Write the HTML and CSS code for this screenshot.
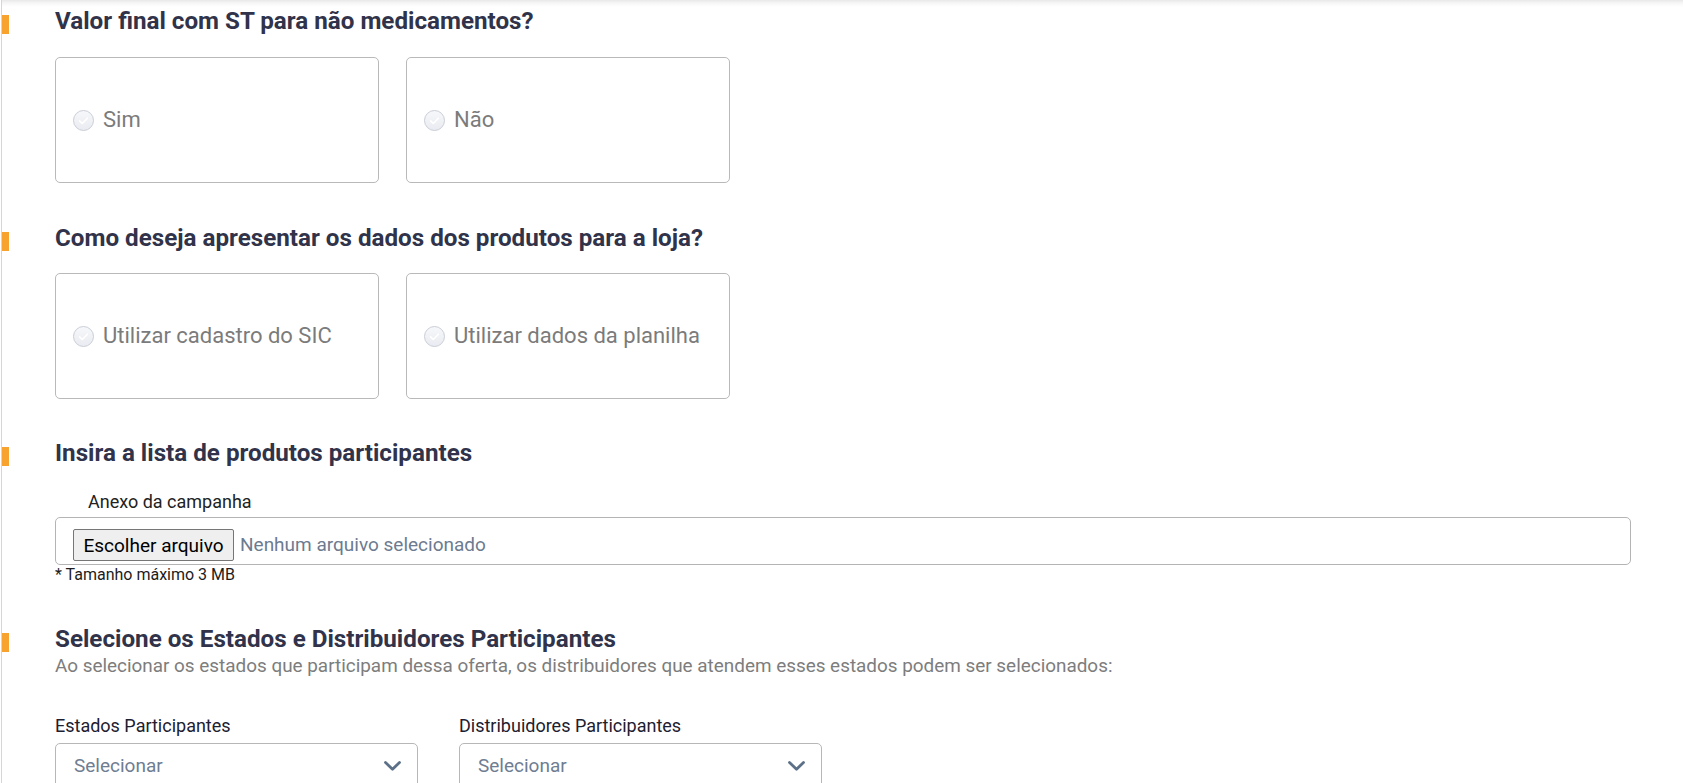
FILE: index.html
```html
<!DOCTYPE html>
<html lang="pt-BR">
<head>
<meta charset="utf-8">
<title>Oferta</title>
<link rel="stylesheet" href="styles.css">
</head>
<body>
<div class="page">
  <section class="block">
    <div class="head"><span class="mark"></span><h2 class="title">Valor final com ST para não medicamentos?</h2></div>
    <div class="content">
      <div class="options options-first">
        <div class="option">
          <svg class="radio" viewBox="0 0 21 21" width="21" height="21"><defs><linearGradient id="rg1" x1="0" y1="0" x2="0" y2="1"><stop offset="0" stop-color="#f7f8fa"/><stop offset="1" stop-color="#e9ebf1"/></linearGradient></defs><circle cx="10.5" cy="10.5" r="10" fill="url(#rg1)" stroke="#c9cdd7" stroke-width="1"/><path d="M6.6 10.9 L9.3 13.5 L14.4 8.2" fill="none" stroke="#ffffff" stroke-width="1.6" stroke-linecap="round" stroke-linejoin="round"/></svg>
          <span class="opt-label">Sim</span>
        </div>
        <div class="option">
          <svg class="radio" viewBox="0 0 21 21" width="21" height="21"><circle cx="10.5" cy="10.5" r="10" fill="url(#rg1)" stroke="#c9cdd7" stroke-width="1"/><path d="M6.6 10.9 L9.3 13.5 L14.4 8.2" fill="none" stroke="#ffffff" stroke-width="1.6" stroke-linecap="round" stroke-linejoin="round"/></svg>
          <span class="opt-label">Não</span>
        </div>
      </div>
    </div>
  </section>

  <section class="block block-2">
    <div class="head"><span class="mark"></span><h2 class="title">Como deseja apresentar os dados dos produtos para a loja?</h2></div>
    <div class="content">
      <div class="options">
        <div class="option">
          <svg class="radio" viewBox="0 0 21 21" width="21" height="21"><circle cx="10.5" cy="10.5" r="10" fill="url(#rg1)" stroke="#c9cdd7" stroke-width="1"/><path d="M6.6 10.9 L9.3 13.5 L14.4 8.2" fill="none" stroke="#ffffff" stroke-width="1.6" stroke-linecap="round" stroke-linejoin="round"/></svg>
          <span class="opt-label">Utilizar cadastro do SIC</span>
        </div>
        <div class="option">
          <svg class="radio" viewBox="0 0 21 21" width="21" height="21"><circle cx="10.5" cy="10.5" r="10" fill="url(#rg1)" stroke="#c9cdd7" stroke-width="1"/><path d="M6.6 10.9 L9.3 13.5 L14.4 8.2" fill="none" stroke="#ffffff" stroke-width="1.6" stroke-linecap="round" stroke-linejoin="round"/></svg>
          <span class="opt-label">Utilizar dados da planilha</span>
        </div>
      </div>
    </div>
  </section>

  <section class="block block-3">
    <div class="head"><span class="mark"></span><h2 class="title">Insira a lista de produtos participantes</h2></div>
    <div class="content">
      <div class="file-label">Anexo da campanha</div>
      <div class="file-box">
        <span class="file-btn">Escolher arquivo</span>
        <span class="file-name">Nenhum arquivo selecionado</span>
      </div>
      <div class="hint">* Tamanho máximo 3 MB</div>
    </div>
  </section>

  <section class="block block-4">
    <div class="head"><span class="mark"></span><h2 class="title">Selecione os Estados e Distribuidores Participantes</h2></div>
    <div class="content">
      <p class="subtitle">Ao selecionar os estados que participam dessa oferta, os distribuidores que atendem esses estados podem ser selecionados:</p>
      <div class="fields">
        <div class="field">
          <div class="field-label">Estados Participantes</div>
          <div class="select">
            <span class="select-text">Selecionar</span>
            <svg class="chev" viewBox="0 0 17 10" width="17" height="10"><path d="M1.5 1.5 L8.5 8.3 L15.5 1.5" fill="none" stroke="#5c7088" stroke-width="2.8" stroke-linecap="round" stroke-linejoin="round"/></svg>
          </div>
        </div>
        <div class="field">
          <div class="field-label">Distribuidores Participantes</div>
          <div class="select">
            <span class="select-text">Selecionar</span>
            <svg class="chev" viewBox="0 0 17 10" width="17" height="10"><path d="M1.5 1.5 L8.5 8.3 L15.5 1.5" fill="none" stroke="#5c7088" stroke-width="2.8" stroke-linecap="round" stroke-linejoin="round"/></svg>
          </div>
        </div>
      </div>
    </div>
  </section>
</div>
</body>
</html>
```

FILE: styles.css
```css
html, body {
  margin: 0;
  background: #ffffff;
}

body {
  font-family: Roboto, "Liberation Sans", Arial, sans-serif;
  overflow: hidden;
}

.page {
  box-sizing: border-box;
  min-height: 783px;
  margin-left: 1px;
  border-left: 1px solid #cbd8e8;
  padding: 8px 52px 0 0;
  background: linear-gradient(to bottom, #e8e8e8 0, #f6f6f6 3px, #ffffff 7px) no-repeat;
}

.head {
  display: flex;
  align-items: flex-start;
}

.mark {
  flex: none;
  width: 7px;
  height: 19px;
  margin-top: 7px;
  margin-right: 46px;
  background: #f8a230;
}

.title {
  margin: 0;
  font-size: 24.2px;
  line-height: 26px;
  font-weight: 700;
  color: #30334a;
}

.content {
  margin-left: 53px;
}

.block-2 { margin-top: 42px; }
.block-3 { margin-top: 41px; }
.block-4 { margin-top: 42px; }

.options {
  display: flex;
  gap: 27px;
  margin-top: 22px;
}

.options-first {
  margin-top: 23px;
}

.option {
  box-sizing: border-box;
  width: 324px;
  height: 126px;
  border: 1px solid #b9b9b9;
  border-radius: 5px;
  display: flex;
  align-items: center;
  gap: 9px;
  padding-left: 17px;
}

.radio {
  flex: none;
  display: block;
}

.opt-label {
  font-size: 22px;
  line-height: 26px;
  color: #7b7b7b;
}

.file-label {
  margin-top: 25px;
  padding-left: 33px;
  font-size: 18px;
  line-height: 21px;
  color: #222222;
}

.file-box {
  box-sizing: border-box;
  margin-top: 5px;
  height: 48px;
  border: 1px solid #b4b4b4;
  border-radius: 5px;
  display: flex;
  align-items: flex-end;
  gap: 6px;
  padding: 0 0 3px 17px;
}

.file-btn {
  box-sizing: border-box;
  width: 161px;
  height: 32px;
  border: 1px solid #767676;
  border-radius: 2px;
  background: #efefef;
  display: flex;
  align-items: center;
  justify-content: center;
  font-size: 19px;
  color: #000000;
}

.file-name {
  font-size: 19px;
  line-height: 32px;
  color: #6c7b90;
}

.hint {
  font-size: 16px;
  line-height: 19px;
  color: #1c1c1c;
}

.subtitle {
  margin: 3px 0 0;
  font-size: 18.9px;
  line-height: 22px;
  color: #7d7d7d;
}

.fields {
  display: flex;
  gap: 41px;
  margin-top: 38px;
}

.field {
  width: 363px;
}

.field-label {
  font-size: 18px;
  line-height: 21px;
  color: #1d2030;
}

.select {
  box-sizing: border-box;
  margin-top: 7px;
  height: 46px;
  border: 1px solid #b7b7b7;
  border-radius: 5px;
  display: flex;
  align-items: center;
  justify-content: space-between;
  padding: 0 16px 0 18px;
}

.select-text {
  font-size: 19px;
  line-height: 22px;
  color: #6e7d92;
}

.chev {
  display: block;
  flex: none;
}
```
